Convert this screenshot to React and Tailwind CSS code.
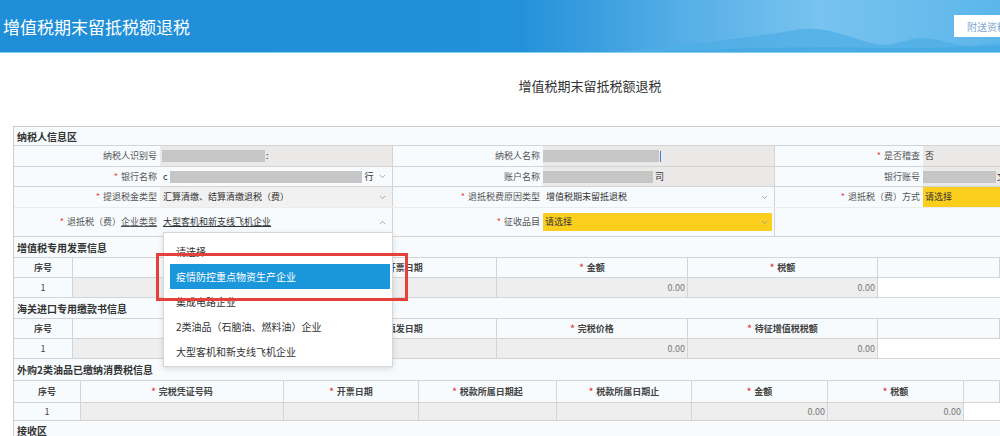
import React from "react";
import { ChevronDown, ChevronUp } from "lucide-react";

function Req() {
  return <span className="mr-[3px] text-[#e8413c]">*</span>;
}

function Chev({ up }) {
  return up ? (
    <ChevronUp size={9} strokeWidth={2} className="shrink-0 text-[#8a8a8a]" />
  ) : (
    <ChevronDown size={9} strokeWidth={2} className="shrink-0 text-[#8a8a8a]" />
  );
}

function Lbl({ req, children }) {
  return (
    <div className="flex items-center justify-end pr-[3px] text-[9px] text-[#555]">
      {req && <Req />}
      {children}
    </div>
  );
}

function Blur({ w }) {
  return <span className={`h-[12px] bg-[#c6c6c6] ${w}`} />;
}

function SecHead({ h, children }) {
  return (
    <div className={`flex items-center border-b border-[#d4d4d4] pl-[3px] text-[10px] font-bold text-[#333] ${h}`}>
      {children}
    </div>
  );
}

function Table12({ cols }) {
  return (
    <div>
      <div className="grid h-[20px] grid-cols-[59px_233px_191px_191px_190px_1fr] border-b border-[#d4d4d4] text-[9px] font-bold text-[#444]">
        {cols.map((c, i) => (
          <div key={i} className="flex items-center justify-center border-r border-[#d4d4d4]">
            {c && i > 0 && <Req />}
            {c}
          </div>
        ))}
      </div>
      <div className="grid h-[20px] grid-cols-[59px_233px_191px_191px_190px_1fr] border-b border-[#d4d4d4] text-[9px] text-[#777]">
        <div className="flex items-center justify-center border-r border-[#d4d4d4] text-[#444]">1</div>
        <div className="border-r border-[#d4d4d4] bg-[#eeeeee]" />
        <div className="border-r border-[#d4d4d4] bg-[#eeeeee]" />
        <div className="flex items-center justify-end border-r border-[#d4d4d4] bg-[#eeeeee] pr-[2px]">0.00</div>
        <div className="flex items-center justify-end border-r border-[#d4d4d4] bg-[#eeeeee] pr-[2px]">0.00</div>
        <div className="bg-white" />
      </div>
    </div>
  );
}

export default function App() {
  const t3 = ["序号", "完税凭证号码", "开票日期", "税款所属日期起", "税款所属日期止", "金额", "税额", ""];
  return (
    <div className="relative h-[436px] w-[1000px] overflow-hidden bg-white font-['Noto_Sans_CJK_SC','Noto_Sans',sans-serif]">
      {/* header */}
      <div className="relative h-[53px] overflow-hidden border-b border-[#86cbf1] bg-[linear-gradient(90deg,#1f8ed8_0%,#2391d9_52%,#55aee6_68%,#78c3ef_82%,#5cb6ea_100%)]">
        <svg className="absolute bottom-0 left-[500px]" width="500" height="52" viewBox="0 0 500 52">
          <path
            d="M110,52 C180,47 250,37 290,31 C302,28 316,28 330,31 C350,36 366,43 382,45 C396,45 406,39 420,38 C438,38 452,45 470,46 L500,43 L500,52 Z"
            fill="#4eaee6"
            opacity="0.75"
          />
          <path d="M150,52 C220,49 300,46 380,48 C420,49 460,47 500,46 L500,52 Z" fill="#3fa7e2" opacity="0.6" />
        </svg>
        <div className="relative flex h-full items-center justify-between pl-[3px]">
          <span className="text-[17px] leading-none text-white">增值税期末留抵税额退税</span>
          <div className="mr-[-22px] flex h-[22px] w-[68px] items-center bg-white pl-[13px] text-[10px] text-[#7ea7cf]">
            附送资料
          </div>
        </div>
      </div>

      {/* page title */}
      <div className="flex h-[73px] justify-center pl-[180px] pt-[25px]">
        <span className="text-[13px] leading-[16px] text-[#333]">增值税期末留抵税额退税</span>
      </div>

      {/* form */}
      <div className="ml-[13px] border-l border-t border-[#cdcdcd] bg-[#f7fbfd]">
        <SecHead h="h-[19px]">纳税人信息区</SecHead>

        {/* row 1 */}
        <div className="grid h-[21px] grid-cols-[146px_233px_150px_232px_148px_1fr] border-b border-[#d4d4d4] text-[9px] text-[#333]">
          <Lbl>纳税人识别号</Lbl>
          <div className="flex items-center border-r border-[#d4d4d4] bg-[#ebe8e8] pl-[2px]">
            <Blur w="w-[103px]" />
            <span className="ml-[1px]">:</span>
          </div>
          <Lbl>纳税人名称</Lbl>
          <div className="flex items-center border-r border-[#d4d4d4] bg-[#ebe8e8]">
            <Blur w="w-[116px]" />
            <span className="ml-[1px] h-[11px] w-[1px] bg-[#3b7fd6]" />
          </div>
          <Lbl req>是否稽查</Lbl>
          <div className="flex items-center bg-[#ebe8e8] pl-[2px]">否</div>
        </div>

        {/* row 2 */}
        <div className="grid h-[20px] grid-cols-[146px_233px_150px_232px_148px_1fr] border-b border-[#d4d4d4] text-[9px] text-[#333]">
          <Lbl req>银行名称</Lbl>
          <div className="flex items-center justify-between border-r border-[#d4d4d4] pl-[3px] pr-[5px]">
            <div className="flex items-center">
              <span className="mr-[2px]">c</span>
              <Blur w="w-[192px]" />
              <span className="ml-[3px]">行</span>
            </div>
            <Chev />
          </div>
          <Lbl>账户名称</Lbl>
          <div className="flex items-center border-r border-[#d4d4d4] bg-[#ebe8e8]">
            <Blur w="w-[110px]" />
            <span className="ml-[2px]">司</span>
          </div>
          <Lbl>银行账号</Lbl>
          <div className="flex items-center bg-[#ebe8e8]">
            <Blur w="w-[73px]" />
            <span className="ml-[1px]">文</span>
          </div>
        </div>

        {/* row 3 */}
        <div className="grid h-[21px] grid-cols-[146px_233px_150px_232px_148px_1fr] border-b border-[#ececec] text-[9px] text-[#333]">
          <Lbl req>提退税金类型</Lbl>
          <div className="flex items-center justify-between border-r border-[#d4d4d4] bg-[#f1f1f1] pl-[3px] pr-[5px]">
            <span>汇算清缴、结算清缴退税（费）</span>
            <Chev />
          </div>
          <Lbl req>退抵税费原因类型</Lbl>
          <div className="flex items-center justify-between border-r border-[#d4d4d4] pl-[3px] pr-[5px]">
            <span>增值税期末留抵退税</span>
            <Chev />
          </div>
          <Lbl req>退抵税（费）方式</Lbl>
          <div className="flex items-center bg-[#fccf1f] pl-[2px]">请选择</div>
        </div>

        {/* row 4 */}
        <div className="grid h-[29px] grid-cols-[146px_233px_150px_232px_148px_1fr] border-b border-[#d4d4d4] text-[9px] text-[#333]">
          <Lbl req>
            退抵税（费）<span className="underline">企业类型</span>
          </Lbl>
          <div className="flex items-center justify-between border-r border-[#d4d4d4] pl-[3px] pr-[5px]">
            <span className="underline">大型客机和新支线飞机企业</span>
            <Chev up />
          </div>
          <Lbl req>征收品目</Lbl>
          <div className="flex items-center border-r border-[#d4d4d4] py-[5px] pr-[2px]">
            <div className="flex h-full w-full items-center justify-between bg-[#fccf1f] pl-[2px] pr-[3px]">
              <span>请选择</span>
              <Chev />
            </div>
          </div>
          <div />
          <div />
        </div>

        <SecHead h="h-[21px]">增值税专用发票信息</SecHead>
        <Table12 cols={["序号", "发票代码", "开票日期", "金额", "税额", ""]} />

        <SecHead h="h-[21px]">海关进口专用缴款书信息</SecHead>
        <Table12 cols={["序号", "缴款书号码", "填发日期", "完税价格", "待征增值税税额", ""]} />

        <SecHead h="h-[22px]">外购2类油品已缴纳消费税信息</SecHead>
        <div className="grid h-[22px] grid-cols-[67px_203px_135px_138px_135px_136px_136px_1fr] border-b border-[#d4d4d4] text-[9px] font-bold text-[#444]">
          {t3.map((c, i) => (
            <div key={i} className="flex items-center justify-center border-r border-[#d4d4d4]">
              {c && i > 0 && <Req />}
              {c}
            </div>
          ))}
        </div>
        <div className="grid h-[18px] grid-cols-[67px_203px_135px_138px_135px_136px_136px_1fr] border-b border-[#d4d4d4] text-[9px] text-[#777]">
          <div className="flex items-center justify-center border-r border-[#d4d4d4] text-[#444]">1</div>
          <div className="border-r border-[#d4d4d4] bg-[#eeeeee]" />
          <div className="border-r border-[#d4d4d4] bg-[#eeeeee]" />
          <div className="border-r border-[#d4d4d4] bg-[#eeeeee]" />
          <div className="border-r border-[#d4d4d4] bg-[#eeeeee]" />
          <div className="flex items-center justify-end border-r border-[#d4d4d4] bg-[#eeeeee] pr-[2px]">0.00</div>
          <div className="flex items-center justify-end border-r border-[#d4d4d4] bg-[#eeeeee] pr-[2px]">0.00</div>
          <div className="bg-white" />
        </div>
        <SecHead h="h-[20px]">接收区</SecHead>
      </div>

      {/* dropdown menu */}
      <div className="absolute left-[163px] top-[232px] h-[135px] w-[230px] border border-[#d6d6d6] bg-white pt-[6px] text-[10px] text-[#333] shadow-[0_2px_6px_rgba(0,0,0,0.12)]">
        <div className="flex h-[25px] items-center pl-[12px]">请选择</div>
        <div className="ml-[6px] mr-[2px] flex h-[25px] items-center bg-[#1a96db] pl-[6px] text-white">疫情防控重点物资生产企业</div>
        <div className="flex h-[25px] items-center pl-[12px]">集成电路企业</div>
        <div className="flex h-[25px] items-center pl-[12px]">2类油品（石脑油、燃料油）企业</div>
        <div className="flex h-[25px] items-center pl-[12px]">大型客机和新支线飞机企业</div>
      </div>

      {/* red highlight box */}
      <div className="absolute left-[156px] top-[253px] h-[48px] w-[252px] border-[3px] border-[#e5403a]" />
    </div>
  );
}
